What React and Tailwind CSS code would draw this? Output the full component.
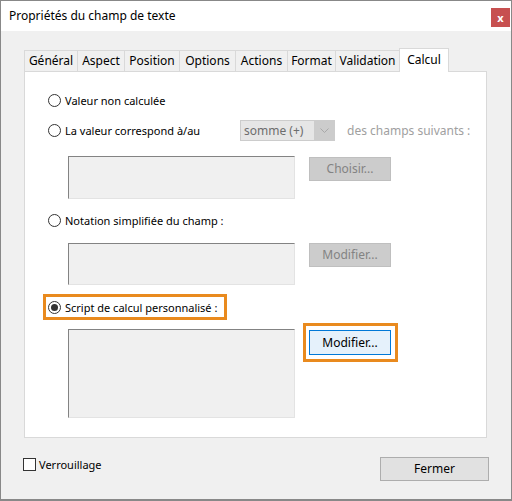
import React from "react";

const tabs = [
  { label: "Général", w: "w-[53px]" },
  { label: "Aspect", w: "w-[47px]" },
  { label: "Position", w: "w-[55px]" },
  { label: "Options", w: "w-[56px]" },
  { label: "Actions", w: "w-[52px]" },
  { label: "Format", w: "w-[48px]" },
  { label: "Validation", w: "w-[64px]" },
];

const Radio = ({ checked, label }) => (
  <div className="flex items-center h-[18px]">
    <span className="w-[13px] h-[13px] rounded-full border border-[#333] bg-white flex items-center justify-center shrink-0">
      {checked && <span className="w-[7px] h-[7px] rounded-full bg-[#333]" />}
    </span>
    <span className="ml-[4px] text-black text-[11px] whitespace-nowrap">{label}</span>
  </div>
);

const Field = ({ h }) => (
  <div className={`w-[227px] ${h} bg-[#f0f0f0] border-t border-l border-[#838383] border-r border-b border-r-[#e3e3e3] border-b-[#e3e3e3] shrink-0`} />
);

const DisabledButton = ({ label }) => (
  <div className="w-[82px] h-[24px] bg-[#cccccc] border border-[#bfbfbf] text-[#838383] flex items-center justify-center shrink-0">
    {label}
  </div>
);

export default function App() {
  return (
    <div className="w-[512px] h-[501px] border border-[#888] border-b-2 bg-[#f0f0f0] flex flex-col text-[12px] leading-none" style={{ fontFamily: '"Noto Sans", "Segoe UI", sans-serif' }}>
      {/* Title bar */}
      <div className="h-[30px] bg-white flex items-start justify-between shrink-0">
        <span className="ml-[8px] mt-[9px] text-black">Propriétés du champ de texte</span>
        <div className="mt-[7px] mr-px w-[19px] h-[19px] bg-[#c75050] text-white font-bold text-[11px] flex items-center justify-center">x</div>
      </div>

      {/* Tabs */}
      <div className="pl-[23px] pr-[24px] mt-[17px]">
        <div className="flex items-end h-[23px]">
          {tabs.map((t) => (
            <div key={t.label} className={`${t.w} h-[21px] border-t border-l border-[#d9d9d9] bg-[#f0f0f0] flex items-center justify-center text-black`}>
              {t.label}
            </div>
          ))}
          <div className="w-[50px] h-[24px] -mb-px relative z-10 border border-b-0 border-[#d9d9d9] bg-white flex items-start justify-center pt-[5px] text-black">
            Calcul
          </div>
        </div>

        {/* Panel */}
        <div className="h-[367px] bg-white border border-[#d9d9d9] flex flex-col pl-[23px]">
          <div className="mt-[19px]">
            <Radio label="Valeur non calculée" />
          </div>

          <div className="mt-[11px] flex items-center h-[21px]">
            <div className="w-[192px]">
              <Radio label="La valeur correspond à/au" />
            </div>
            <div className="w-[95px] h-[21px] border border-[#cccccc] bg-[#cccccc] flex">
              <div className="w-[73px] bg-[#e6e6e6] text-[#6d6d6d] flex items-center pl-[3px]">somme (+)</div>
              <div className="flex-1 flex items-center justify-center">
                <svg width="9" height="6" viewBox="0 0 9 6" fill="none" stroke="#a8a8a8" strokeWidth="1">
                  <path d="M0.5 0.5 L4.5 4.5 L8.5 0.5" />
                </svg>
              </div>
            </div>
            <span className="ml-[12px] text-[#a0a0a0] whitespace-nowrap">des champs suivants :</span>
          </div>

          <div className="mt-[15px] flex items-start pl-[20px]">
            <Field h="h-[43px]" />
            <div className="ml-[14px] mt-px">
              <DisabledButton label="Choisir..." />
            </div>
          </div>

          <div className="mt-[12px]">
            <Radio label="Notation simplifiée du champ :" />
          </div>

          <div className="mt-[14px] flex items-start pl-[20px]">
            <Field h="h-[42px]" />
            <div className="ml-[14px]">
              <DisabledButton label="Modifier..." />
            </div>
          </div>

          <div className="mt-[9px] -ml-[5px] w-[184px] h-[26px] border-[3px] border-[#e98a1e] flex items-center pl-[2px]">
            <Radio checked label="Script de calcul personnalisé :" />
          </div>

          <div className="mt-[3px] flex items-start pl-[20px]">
            <div className="mt-[6px]">
              <Field h="h-[89px]" />
            </div>
            <div className="ml-[8px] w-[95px] h-[39px] border-[3px] border-[#e98a1e] pl-[3px] pt-[4px]">
              <div className="w-[82px] h-[25px] bg-[#e5f1fb] border border-[#0078d7] text-black flex items-center justify-center">
                Modifier...
              </div>
            </div>
          </div>
        </div>
      </div>

      {/* Footer */}
      <div className="mt-[19px] pl-[22px] pr-[22px] flex items-start justify-between">
        <div className="flex items-center mt-px">
          <span className="w-[13px] h-[13px] border border-[#333] bg-white shrink-0" />
          <span className="ml-[3px] text-black text-[11px]">Verrouillage</span>
        </div>
        <div className="w-[109px] h-[24px] bg-[#e1e1e1] border border-[#adadad] text-black flex items-center justify-center">
          Fermer
        </div>
      </div>
    </div>
  );
}
